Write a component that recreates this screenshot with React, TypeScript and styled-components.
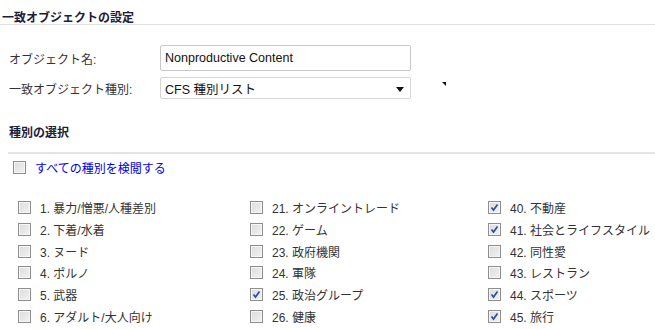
import React from "react";
import styled, { createGlobalStyle } from "styled-components";

const GlobalStyle = createGlobalStyle`
  body {
    margin: 0;
    background: #ffffff;
    font-family: "Liberation Sans", "Noto Sans CJK JP", sans-serif;
    font-size: 12px;
    color: #333333;
  }
`;

interface Category {
  label: string;
  checked: boolean;
}

const columns: Category[][] = [
  [
    { label: "1. 暴力/憎悪/人種差別", checked: false },
    { label: "2. 下着/水着", checked: false },
    { label: "3. ヌード", checked: false },
    { label: "4. ポルノ", checked: false },
    { label: "5. 武器", checked: false },
    { label: "6. アダルト/大人向け", checked: false },
  ],
  [
    { label: "21. オンライントレード", checked: false },
    { label: "22. ゲーム", checked: false },
    { label: "23. 政府機関", checked: false },
    { label: "24. 軍隊", checked: false },
    { label: "25. 政治グループ", checked: true },
    { label: "26. 健康", checked: false },
  ],
  [
    { label: "40. 不動産", checked: true },
    { label: "41. 社会とライフスタイル", checked: true },
    { label: "42. 同性愛", checked: false },
    { label: "43. レストラン", checked: false },
    { label: "44. スポーツ", checked: true },
    { label: "45. 旅行", checked: true },
  ],
];

const Page = styled.div`
  width: 655px;
  height: 329px;
  overflow: hidden;
`;

const SectionTitle = styled.div`
  height: 16px;
  padding: 8px 0 0 2px;
  display: flex;
  align-items: center;
  font-weight: bold;
  font-size: 12px;
  color: #1c1c3c;
  border-bottom: 1px solid #e2e2e2;
`;

const Form = styled.div`
  padding: 20px 0 0 9px;
  display: flex;
  flex-direction: column;
  gap: 6px;
`;

const FormRow = styled.div`
  display: flex;
  align-items: center;
`;

const Label = styled.div`
  width: 151px;
  color: #333333;
`;

const TextBox = styled.div`
  width: 245px;
  height: 24px;
  padding-left: 4px;
  border: 1px solid #c8c8c8;
  border-radius: 2px;
  display: flex;
  align-items: center;
  font-size: 12.5px;
  color: #111111;
`;

const SelectBox = styled(TextBox)`
  height: 20px;
  justify-content: space-between;
  padding-right: 6px;
  width: 239px;
  border-color: #d4d4d4;
`;

const Arrow = styled.span`
  width: 0;
  height: 0;
  border-left: 4px solid transparent;
  border-right: 4px solid transparent;
  border-top: 5px solid #111111;
  margin-top: 2px;
`;

const Marker = styled.span`
  margin-left: 31px;
  width: 0;
  height: 0;
  border-top: 4px solid #111111;
  border-left: 4px solid transparent;
  margin-top: -9px;
`;

const SubTitle = styled.div`
  margin-top: 20px;
  padding-left: 9px;
  height: 25px;
  display: flex;
  align-items: center;
  font-weight: bold;
  color: #1c1c3c;
`;

const Divider = styled.div`
  margin: 8px 0 0 8px;
  border-top: 2px solid #e4e4e4;
`;

const CheckAllRow = styled.div`
  display: flex;
  align-items: center;
  gap: 9px;
  padding: 6px 0 0 13px;
  height: 14px;
  color: #0000ee;
`;

const Grid = styled.div`
  margin-top: 23px;
  padding-left: 18px;
  display: grid;
  grid-template-columns: 232px 238px 1fr;
`;

const Column = styled.div`
  display: flex;
  flex-direction: column;
`;

const Item = styled.div`
  height: 21.7px;
  display: flex;
  align-items: center;
  gap: 9px;
  color: #333333;
`;

const Box = styled.span<{ $checked: boolean }>`
  width: 11px;
  height: 11px;
  border: 1px solid #8e8e8e;
  background: linear-gradient(135deg, #dcdcdc 0%, #f2f2f2 100%);
  box-shadow: inset 0 0 0 1px #f6f6f6;
  display: inline-flex;
  align-items: center;
  justify-content: center;
  flex-shrink: 0;

  svg {
    display: ${(p) => (p.$checked ? "block" : "none")};
  }
`;

const CheckBox: React.FC<{ checked: boolean }> = ({ checked }) => (
  <Box $checked={checked}>
    <svg width="9" height="9" viewBox="0 0 9 9">
      <path d="M1.5 4.5 L3.5 7 L7.5 1.5" fill="none" stroke="#2b4fa8" strokeWidth="1.7" />
    </svg>
  </Box>
);

export default function App() {
  return (
    <Page>
      <GlobalStyle />
      <SectionTitle>一致オブジェクトの設定</SectionTitle>
      <Form>
        <FormRow>
          <Label>オブジェクト名:</Label>
          <TextBox>Nonproductive Content</TextBox>
        </FormRow>
        <FormRow>
          <Label>一致オブジェクト種別:</Label>
          <SelectBox>
            <span>CFS 種別リスト</span>
            <Arrow />
          </SelectBox>
          <Marker />
        </FormRow>
      </Form>
      <SubTitle>種別の選択</SubTitle>
      <Divider />
      <CheckAllRow>
        <CheckBox checked={false} />
        <span>すべての種別を検閲する</span>
      </CheckAllRow>
      <Grid>
        {columns.map((col, i) => (
          <Column key={i}>
            {col.map((c) => (
              <Item key={c.label}>
                <CheckBox checked={c.checked} />
                <span>{c.label}</span>
              </Item>
            ))}
          </Column>
        ))}
      </Grid>
    </Page>
  );
}
